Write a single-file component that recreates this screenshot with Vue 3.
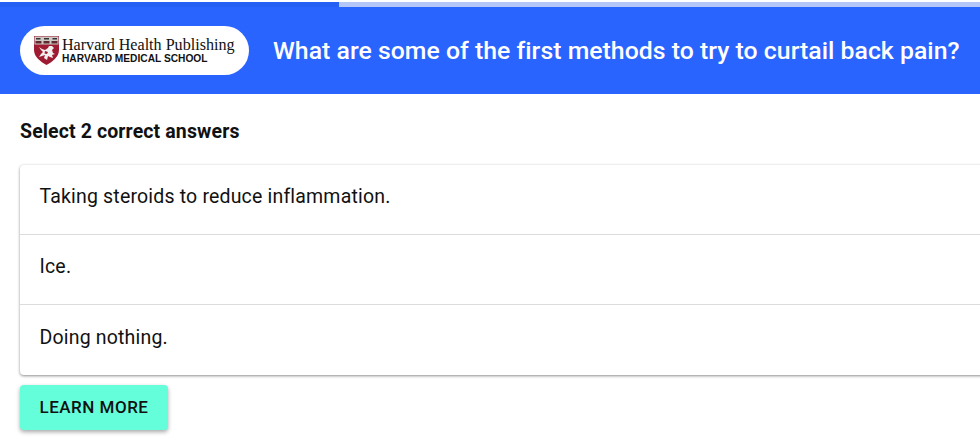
<template>
  <div class="quiz">
    <div class="progress">
      <div class="progress-fill" :style="{ width: progress + 'px' }"></div>
    </div>
    <header class="head">
      <div class="logo">
        <svg class="shield" width="25" height="29" viewBox="0 0 25 29" xmlns="http://www.w3.org/2000/svg">
          <path d="M0 0H25V14C25 21 18 26 12.5 29C7 26 0 21 0 14Z" fill="#9e1b32" />
          <rect x="0.5" y="0.5" width="24" height="8" fill="#cfc9c6" />
          <path d="M2 2H6.500V3.500H2ZM10 2H15V3.500H10ZM18.500 2H23V3.500H18.500Z" fill="#333" />
          <path d="M1.500 5H7.500V7.500H1.500ZM9.500 5H15.500V7.500H9.500ZM17.500 5H23.500V7.500H17.500Z" fill="#5e2a30" />
          <path d="M5 11L8 13L11 14L14 12L15 10L18 10L20 12L18 14L19 17L21 18L18 19L19 22L16 21L14 20L13 24L10 22L11 19L8 20L5 21L7 18L9 16L7 14Z" fill="#f2efef" />
          <path d="M11 15L14 16L13 18L10.500 17.500Z" fill="#9e1b32" />
        </svg>
        <div class="logo-text">
          <div class="logo-top">Harvard Health Publishing</div>
          <div class="logo-bottom">HARVARD MEDICAL SCHOOL</div>
        </div>
      </div>
      <h1 class="question">{{ question }}</h1>
    </header>
    <main class="body">
      <div class="hint">Select 2 correct answers</div>
      <ul class="answers">
        <li v-for="a in answers" :key="a" class="answer">{{ a }}</li>
      </ul>
      <button class="more">LEARN MORE</button>
    </main>
  </div>
</template>

<script setup>
const progress = 339
const question = 'What are some of the first methods to try to curtail back pain?'
const answers = ['Taking steroids to reduce inflammation.', 'Ice.', 'Doing nothing.']
</script>

<style scoped>
.quiz {
  width: 980px;
  height: 445px;
  overflow: hidden;
  font-family: Roboto, sans-serif;
  color: #111;
  background: #fff;
}

.progress {
  margin-top: 2px;
  height: 5px;
  background: #b3c6f7;
}

.progress-fill {
  height: 100%;
  background: #2560f5;
}

.head {
  height: 87px;
  box-sizing: border-box;
  padding: 0 0 0 20px;
  display: flex;
  align-items: center;
  gap: 24px;
  background: #2a64ff;
}

.logo {
  width: 229px;
  height: 49px;
  flex: none;
  border-radius: 25px;
  background: #fff;
  display: flex;
  align-items: center;
  gap: 3px;
  padding-left: 14px;
  box-sizing: border-box;
}

.shield {
  flex: none;
}

.logo-text {
  color: #111;
}

.logo-top {
  font-family: "Liberation Serif", serif;
  font-size: 16.1px;
  line-height: 17px;
  white-space: nowrap;
}

.logo-bottom {
  font-family: "Liberation Sans", sans-serif;
  font-weight: 700;
  font-size: 10.2px;
  line-height: 12px;
  white-space: nowrap;
}

.question {
  margin: 0;
  font-size: 24.8px;
  font-weight: 500;
  letter-spacing: 0.02px;
  color: #fff;
  white-space: nowrap;
}

.body {
  padding: 0 0 0 20px;
}

.hint {
  padding-top: 27px;
  font-size: 19.5px;
  font-weight: 700;
  letter-spacing: 0.12px;
  line-height: 21px;
}

.answers {
  list-style: none;
  margin: 23px -20px 0 0;
  padding: 0;
  border-radius: 4px;
  background: #fff;
  box-shadow: 0 1px 3px rgba(0, 0, 0, 0.45);
}

.answer {
  height: 70px;
  box-sizing: border-box;
  padding: 0 20px 6px 19.5px;
  display: flex;
  align-items: center;
  font-size: 19.5px;
  letter-spacing: 0.18px;
  border-bottom: 1px solid #dcdcdc;
}

.answer:last-child {
  height: 70px;
  border-bottom: none;
}

.more {
  display: block;
  margin-top: 10px;
  width: 148px;
  height: 45px;
  padding: 0 0 2px;
  border: none;
  border-radius: 4px;
  background: #64ffda;
  color: #111;
  font-family: Roboto, sans-serif;
  font-size: 17px;
  font-weight: 500;
  letter-spacing: 0.5px;
  box-shadow: 0 2px 4px rgba(0, 0, 0, 0.35);
}
</style>
